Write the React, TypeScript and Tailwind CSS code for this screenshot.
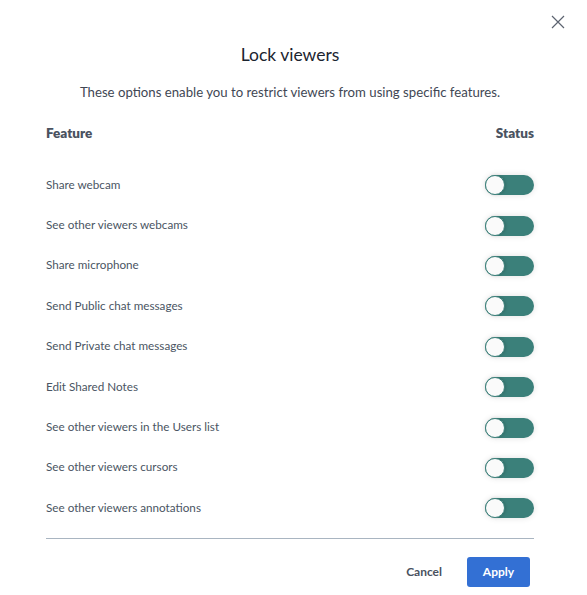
import { useState } from "react";

const features = [
  "Share webcam",
  "See other viewers webcams",
  "Share microphone",
  "Send Public chat messages",
  "Send Private chat messages",
  "Edit Shared Notes",
  "See other viewers in the Users list",
  "See other viewers cursors",
  "See other viewers annotations",
];

function Toggle({ on, onClick }: { on: boolean; onClick: () => void }) {
  return (
    <button
      onClick={onClick}
      className={`relative w-[49px] h-[20px] rounded-full shadow-[0_0_6px_rgba(0,0,0,0.12)] ${
        on ? "bg-[#2f7d75]" : "bg-[#3b807a]"
      }`}
    >
      <span
        className={`absolute top-0 w-[20px] h-[20px] rounded-full bg-[#fafafa] border border-[#3b807a] shadow-[1px_0_3px_rgba(0,0,0,0.15)] ${
          on ? "right-0" : "left-0"
        }`}
      />
    </button>
  );
}

export default function App() {
  const [locks, setLocks] = useState<boolean[]>(features.map(() => false));

  return (
    <div
      className="relative w-[587px] h-[595px] bg-white text-[#4a5563]"
      style={{ fontFamily: "Lato, 'Noto Sans', sans-serif" }}
    >
      <button className="absolute top-[15px] left-[551px] w-[14px] h-[14px] text-[#5c6370]">
        <svg viewBox="0 0 14 14" className="w-[14px] h-[14px]" fill="none" stroke="currentColor" strokeWidth="1.2">
          <path d="M1 1L13 13M13 1L1 13" />
        </svg>
      </button>

      <div className="pl-[46px] pr-[53px] pt-[43px]">
        <h1 className="text-center text-[17.5px] leading-[24px] text-[#1b2430]">Lock viewers</h1>
        <p className="mt-[15px] text-center text-[13.2px] leading-[20px] text-[#3f4754]">
          These options enable you to restrict viewers from using specific features.
        </p>

        <div className="mt-[21px] flex justify-between text-[13.5px] leading-[20px] font-extrabold text-[#4a5260]">
          <span>Feature</span>
          <span>Status</span>
        </div>

        <div className="mt-[22px]">
          {features.map((f, i) => (
            <div key={f} className="flex items-center justify-between h-[40.4px]">
              <span className="text-[11.7px] leading-[16px] -mt-[3px]">{f}</span>
              <Toggle
                on={locks[i]}
                onClick={() => setLocks((prev) => prev.map((v, j) => (j === i ? !v : v)))}
              />
            </div>
          ))}
        </div>

        <div className="mt-[9px] border-t border-[#a9b5c1]" />

        <div className="mt-[18px] flex justify-end items-center pr-[4px]">
          <button className="mr-[25px] text-[12px] font-bold text-[#4a5260]">Cancel</button>
          <button className="w-[63px] h-[30px] rounded-[3px] bg-[#3370d4] text-white text-[12px] font-bold">
            Apply
          </button>
        </div>
      </div>
    </div>
  );
}
